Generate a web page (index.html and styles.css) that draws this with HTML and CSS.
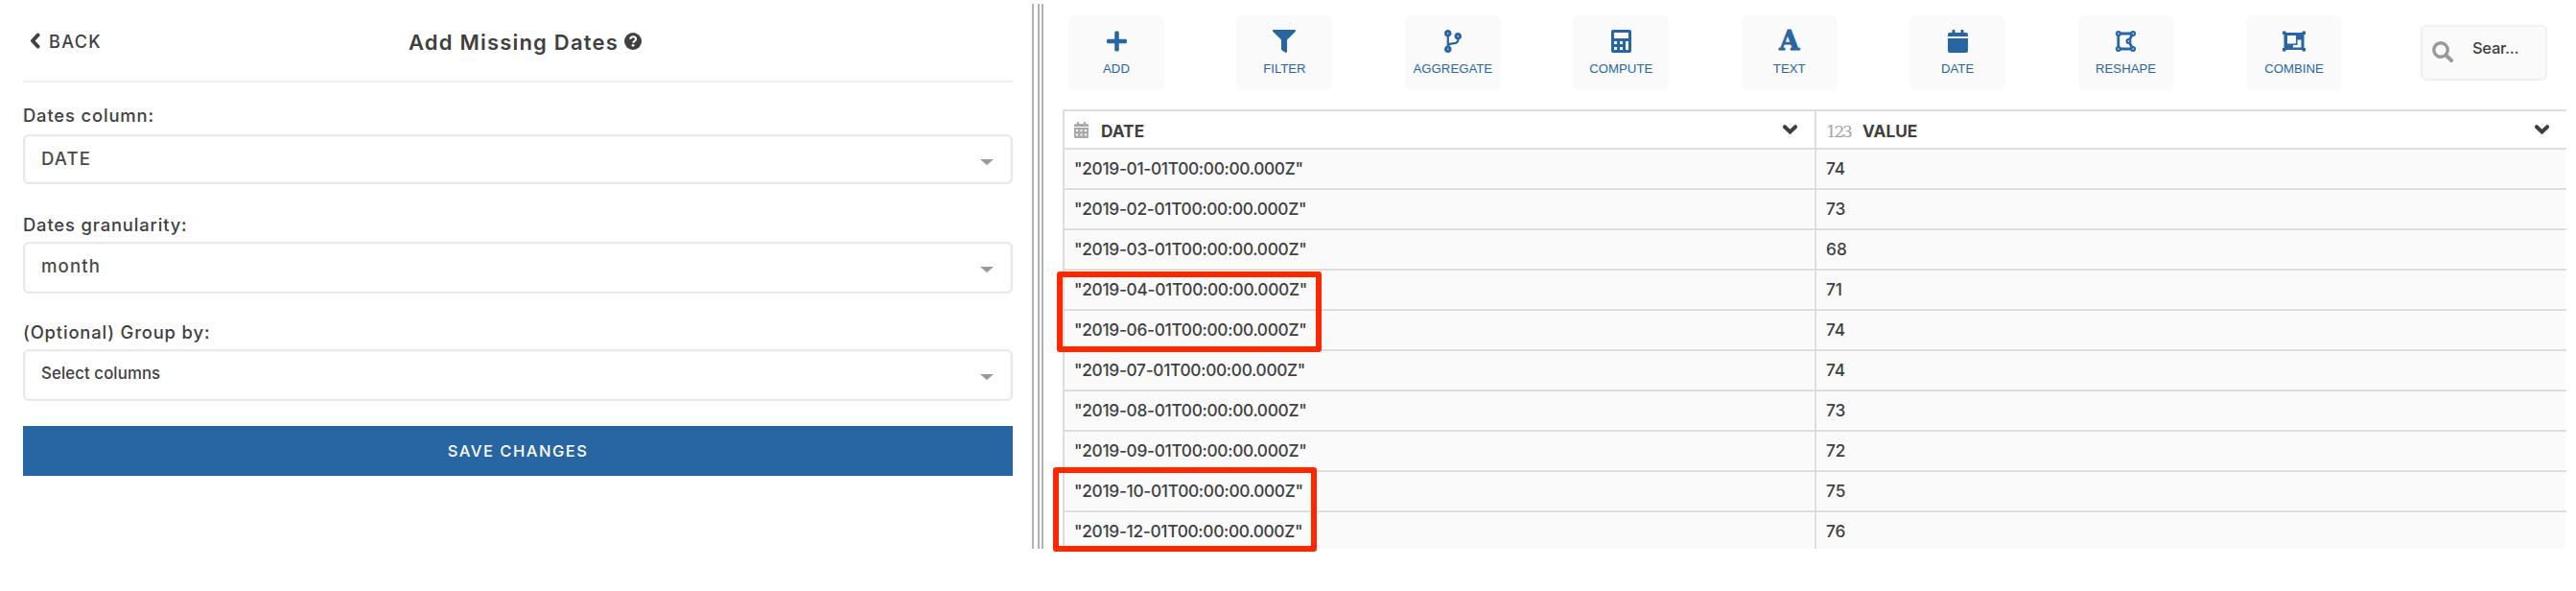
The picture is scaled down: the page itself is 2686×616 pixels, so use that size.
FILE: index.html
```html
<!DOCTYPE html>
<html lang="en">
<head>
<meta charset="utf-8">
<title>Add Missing Dates</title>
<link rel="stylesheet" href="styles.css">
</head>
<body>
<div class="app">
  <section class="panel">
    <header class="panel-head">
      <a class="back"><svg class="back-icon" viewBox="0 0 11 17"><path d="M8.500 2.500 3 8.500 8.500 14.500" fill="none" stroke="currentColor" stroke-width="4" stroke-linecap="round" stroke-linejoin="round"/></svg><span class="back-text">BACK</span></a>
      <h1 class="title"><span class="title-text">Add Missing Dates</span><svg class="help" viewBox="0 0 18 18"><circle cx="9" cy="9" r="9" fill="currentColor"/><path d="M6 6.8C6.6 5 7.8 4.3 9.1 4.3c1.7 0 3 1 3 2.5 0 2-2.9 2-2.9 3.9" fill="none" stroke="#fff" stroke-width="2"/><circle cx="9.1" cy="13.3" r="1.4" fill="#fff"/></svg></h1>
    </header>
    <label class="label l-col">Dates column:</label>
    <div class="select s-col"><span class="t-value">DATE</span><i class="caret"></i></div>
    <label class="label l-gran">Dates granularity:</label>
    <div class="select tall s-gran"><span class="t-value">month</span><i class="caret"></i></div>
    <label class="label l-group">(Optional) Group by:</label>
    <div class="select tall s-group"><span class="t-cols">Select columns</span><i class="caret"></i></div>
    <button class="save">SAVE CHANGES</button>
  </section>
  <div class="splitter"><i></i><i></i><i></i></div>
  <section class="data">
    <div class="toolbar">
      <div class="tools">
        <button class="tool"><svg viewBox="0 0 448 512"><path d="M416 208H272V64c0-17.67-14.33-32-32-32h-32c-17.67 0-32 14.33-32 32v144H32c-17.67 0-32 14.33-32 32v32c0 17.67 14.33 32 32 32h144v144c0 17.67 14.33 32 32 32h32c17.67 0 32-14.33 32-32V304h144c17.67 0 32-14.33 32-32v-32c0-17.67-14.33-32-32-32z"/></svg><span>ADD</span></button>
        <button class="tool"><svg viewBox="0 0 512 512"><path d="M487.976 0H24.028C2.71 0-8.047 25.866 7.058 40.971L192 225.941V432c0 7.831 3.821 15.17 10.237 19.662l80 55.98C298.02 518.69 320 507.493 320 487.98V225.941l184.947-184.97C520.021 25.896 509.338 0 487.976 0z"/></svg><span>FILTER</span></button>
        <button class="tool"><svg viewBox="0 0 384 512"><path d="M384 144c0-44.2-35.8-80-80-80s-80 35.8-80 80c0 36.4 24.3 67.1 57.5 76.8-.6 16.1-4.2 28.5-11 36.9-15.4 19.2-49.3 22.4-85.2 25.7-28.2 2.6-57.4 5.4-81.3 16.9v-144c32.5-10.2 56-40.5 56-76.3 0-44.2-35.8-80-80-80S0 35.8 0 80c0 35.8 23.5 66.1 56 76.3v199.3C23.5 365.9 0 396.2 0 432c0 44.2 35.8 80 80 80s80-35.8 80-80c0-34-21.2-63.1-51.2-74.6 3.1-5.2 7.8-9.8 14.9-13.4 16.2-8.2 40.4-10.4 66.1-12.8 42.2-3.9 90-8.4 118.2-43.4 14-17.4 21.1-39.8 21.6-67.9 31.6-10.8 54.4-40.7 54.4-75.9zM80 64c8.8 0 16 7.2 16 16s-7.2 16-16 16-16-7.2-16-16 7.2-16 16-16zm0 384c-8.8 0-16-7.2-16-16s7.2-16 16-16 16 7.2 16 16-7.2 16-16 16zm224-320c8.8 0 16 7.2 16 16s-7.2 16-16 16-16-7.2-16-16 7.2-16 16-16z"/></svg><span>AGGREGATE</span></button>
        <button class="tool"><svg viewBox="0 0 21 24"><path fill-rule="evenodd" d="M2 0h17a2 2 0 0 1 2 2v20a2 2 0 0 1-2 2H2a2 2 0 0 1-2-2V2a2 2 0 0 1 2-2zM3 3v6h15V3zM3 12v3h3v-3zM9 12v3h3v-3zM15 12v9h3v-9zM3 18v3h3v-3zM9 18v3h3v-3z"/></svg><span>COMPUTE</span></button>
        <button class="tool"><b class="letter">A</b><span>TEXT</span></button>
        <button class="tool"><svg viewBox="0 0 21 24"><path d="M0 7V5a2 2 0 0 1 2-2h2.500V.7A.7.7 0 0 1 5.200 0h1.600a.7.7 0 0 1 .7.7V3h6V.7a.7.7 0 0 1 .7-.7h1.600a.7.7 0 0 1 .7.7V3H19a2 2 0 0 1 2 2v2zM0 9h21v13a2 2 0 0 1-2 2H2a2 2 0 0 1-2-2z"/></svg><span>DATE</span></button>
        <button class="tool"><svg viewBox="0 0 21 24"><g fill="none" stroke="currentColor"><path stroke-width="2.800" d="M2.800 4H18L13.500 12 18 20H2.800z"/><g fill="#fafafa" stroke-width="2.200"><circle cx="2.800" cy="4" r="1.900"/><circle cx="18.200" cy="4" r="1.900"/><circle cx="13.500" cy="12" r="1.900"/><circle cx="2.800" cy="20" r="1.900"/><circle cx="18.200" cy="20" r="1.900"/></g></g></svg><span>RESHAPE</span></button>
        <button class="tool"><svg viewBox="0 0 24 24"><path fill-rule="evenodd" d="M0 1.500h3.500V3h17V1.500H24V5h-1.500v14H24v3.500h-3.500V21h-17v1.500H0V19h1.500V5H0zM5 6v8.500h9V6zM15.500 10.500V16H11V18.500H19.500V10.500z"/></svg><span>COMBINE</span></button>
      </div>
      <div class="search"><svg viewBox="0 0 22 22"><circle cx="9" cy="9" r="7.200" fill="none" stroke="#999" stroke-width="3.400"/><path d="M14.500 14.500 20 20" stroke="#999" stroke-width="4" stroke-linecap="round"/></svg><span>Sear...</span></div>
    </div>
    <div class="grid">
      <div class="th"><svg class="cal" viewBox="0 0 15 17"><path fill-rule="evenodd" d="M0 5V3.500A1.500 1.500 0 0 1 1.500 2H3V0h2v2h5V0h2v2h1.500A1.500 1.500 0 0 1 15 3.500V5zM0 6h15v9.500a1.500 1.500 0 0 1-1.500 1.500h-12A1.500 1.500 0 0 1 0 15.500zM2 8v2h2V8zM6.500 8v2h2V8zM11 8v2h2V8zM2 12.500v2h2v-2zM6.500 12.500v2h2v-2zM11 12.500v2h2v-2z"/></svg><span class="th-name">DATE</span><svg class="chev" viewBox="0 0 15 10"><path d="M2 2.200 7.500 7.500 13 2.200"/></svg></div>
      <div class="th"><span class="num">123</span><span class="th-name">VALUE</span><svg class="chev" viewBox="0 0 15 10"><path d="M2 2.200 7.500 7.500 13 2.200"/></svg></div>
      <div class="td d">"2019-01-01T00:00:00.000Z"</div><div class="td">74</div>
      <div class="td d">"2019-02-01T00:00:00.000Z"</div><div class="td">73</div>
      <div class="td d">"2019-03-01T00:00:00.000Z"</div><div class="td">68</div>
      <div class="td d">"2019-04-01T00:00:00.000Z"</div><div class="td">71</div>
      <div class="td d">"2019-06-01T00:00:00.000Z"</div><div class="td">74</div>
      <div class="td d">"2019-07-01T00:00:00.000Z"</div><div class="td">74</div>
      <div class="td d">"2019-08-01T00:00:00.000Z"</div><div class="td">73</div>
      <div class="td d">"2019-09-01T00:00:00.000Z"</div><div class="td">72</div>
      <div class="td d">"2019-10-01T00:00:00.000Z"</div><div class="td">75</div>
      <div class="td d">"2019-12-01T00:00:00.000Z"</div><div class="td">76</div>
    </div>
  </section>
  <div class="mark mark-a"></div>
  <div class="mark mark-b"></div>
</div>
</body>
</html>
```
FILE: styles.css
```css
* { box-sizing: border-box; }
body { margin: 0; background: #fff; color: #404040; font: 500 17.3px/20px Inter, "Open Sans", sans-serif; }
button { border: 0; padding: 0; font: inherit; }
svg { display: block; fill: currentColor; }
.app { position: relative; width: 2686px; height: 616px; display: flex; align-items: flex-start; overflow: hidden; }

/* settings panel */
.panel { width: 1076px; padding: 4px 20px 0 24px; display: flex; flex-direction: column; }
.panel-head { height: 82px; border-bottom: 2px solid #efefef; display: flex; align-items: flex-start; }
.back { display: flex; padding: 30px 0 0 7px; width: 402px; }
.back-icon { width: 11px; height: 17px; margin-right: 9px; }
.back-text { font-size: 18px; letter-spacing: 1.4px; }
.title { margin: 0; display: flex; padding-top: 26px; font-size: 22px; line-height: 28px; font-weight: 600; }
.title-text { width: 225px; white-space: nowrap; letter-spacing: 1.2px; }
.help { width: 18px; height: 18px; margin-top: 4px; }
.label { height: 20px; font-size: 18.4px; white-space: nowrap; letter-spacing: .85px; }
.l-col { margin: 24px 0 10px; }
.l-gran { margin: 32px 0 8px; }
.l-group { margin: 30px 0 8px; }
.select { height: 52px; border: 2px solid #e8e8e8; border-radius: 6px; box-shadow: inset 0 0 2px #e8e8e8; padding: 13px 18px 0 17px; display: flex; justify-content: space-between; color: #4a4a4a; }
.select.tall { height: 54px; }
.caret { margin-top: 11px; height: 0; border: 7px solid transparent; border-top: 6px solid #999; border-bottom: 0; }
.t-value { font-size: 18.6px; font-weight: 450; letter-spacing: 1.1px; }
.t-cols { font-size: 16.8px; color: #404040; letter-spacing: .1px; }
.save { margin-top: 26px; height: 52px; background: #2866a3; color: #fff; font-size: 16.5px; letter-spacing: 1.5px; }

/* resizer */
.splitter { width: 12px; height: 568px; margin-top: 4px; display: flex; }
.splitter i { width: 2px; background: #b3b3b3; margin-right: 2px; flex: none; }
.splitter i:first-child { margin-right: 4px; }

.data { margin-left: 20px; width: 1568px; height: 572px; overflow: hidden; }
.toolbar { height: 114px; padding: 16px 20px 0 6px; display: flex; justify-content: space-between; }
.tools { width: 1328px; display: flex; justify-content: space-between; }
.tool { width: 100px; height: 78px; border-radius: 6px; background: #fafafa; color: #2866a3; display: flex; flex-direction: column; align-items: center; padding-top: 15px; font: 13.2px/16px "Liberation Sans", Arial, sans-serif; }
.tool svg { height: 24px; margin-bottom: 9px; }
.letter { font: bold 27px/24px "DejaVu Serif", serif; height: 24px; margin-bottom: 9px; -webkit-text-stroke: 1px currentColor; }
.search { width: 132px; height: 58px; margin-top: 10px; border: 2px solid #f0f0f0; border-radius: 6px; background: #fafafa; display: flex; padding: 15px 0 0 10px; font-size: 16.5px; }
.search svg { width: 22px; height: 22px; margin-right: 20px; }
.search span { margin-top: -3px; letter-spacing: -.3px; }

/* table */
.grid { display: grid; grid-template-columns: 784px 784px; grid-template-rows: 40px; grid-auto-rows: 42px; border-top: 2px solid #ddd; border-left: 2px solid #ddd; }
.th { height: 40px; display: flex; padding: 11px 18px 0 10px; border-bottom: 2px solid #ddd; border-right: 2px solid #ddd; }
.td { padding: 10px 10px 0; border-bottom: 2px solid #ddd; border-right: 2px solid #ddd; background: #fafafa; box-shadow: inset -1px -1px #fff; white-space: nowrap; }
.td.d { letter-spacing: -.3px; }
.cal { width: 15px; height: 17px; color: #aaa; margin-right: 13px; }
.num { font: 17px/20px "DejaVu Serif", serif; color: #a3a3a3; letter-spacing: -2.3px; width: 38px; }
.th-name { font-weight: 700; }
.chev { width: 15px; height: 10px; margin: 3px 0 0 auto; }
.chev path { fill: none; stroke: currentColor; stroke-width: 4; stroke-linecap: round; }

/* highlights */
.mark { position: absolute; border: 6px solid #ff2600; border-radius: 3px; }
.mark-a { left: 1102px; top: 283px; width: 276px; height: 84px; }
.mark-b { left: 1098px; top: 487px; width: 275px; height: 88px; }
```
